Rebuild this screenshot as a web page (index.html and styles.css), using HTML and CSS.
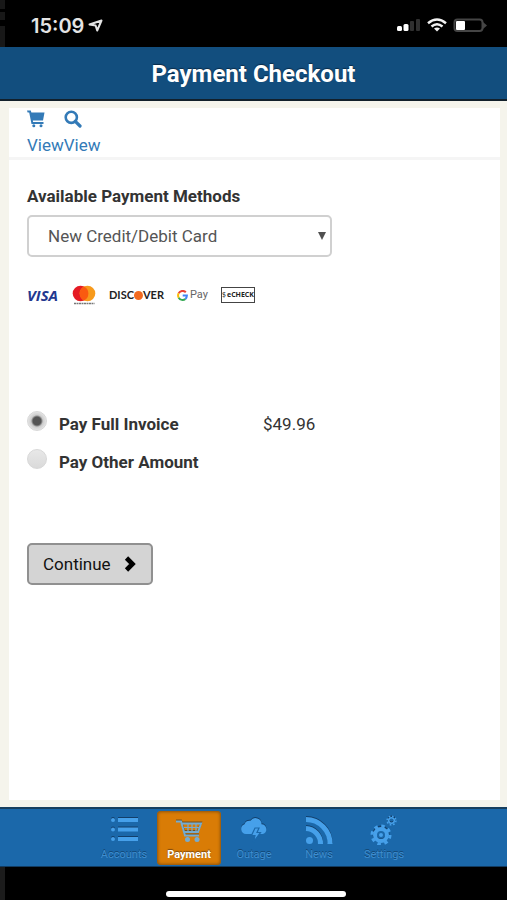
FILE: index.html
```html
<!DOCTYPE html>
<html lang="en">
<head>
<meta charset="utf-8">
<meta name="viewport" content="width=device-width, initial-scale=1">
<title>Payment Checkout</title>
<link rel="stylesheet" href="styles.css">
</head>
<body>
<div class="status">
  <div class="clock">
    <span>15:09</span>
    <svg width="15" height="14" viewBox="0 0 15 14" aria-hidden="true"><path d="M1.500 5.500 13.500 1.500 9.200 11.500 7.600 6.500Z" fill="none" stroke="#e4e4e4" stroke-width="2" stroke-linejoin="round"/></svg>
  </div>
  <div class="signals">
    <svg width="24" height="14" viewBox="0 0 24 14" aria-hidden="true"><rect y="8" width="5" height="5" rx="1.5" fill="#fff"/><rect x="6.500" y="6" width="5" height="7" rx="1.500" fill="#fff"/><rect x="13" y="3" width="4" height="10" rx="1" fill="#303030"/><rect x="19" y="1" width="4" height="12" rx="1" fill="#303030"/></svg>
    <svg width="20" height="14" viewBox="0 0 20 14" aria-hidden="true"><g fill="none" stroke="#f2f2f2" stroke-width="2.500"><path d="M1 5.200Q10-2.300 19 5.200"/><path d="M4.500 8.500Q10 4 15.500 8.500"/></g><path d="M7 10.500Q10 8.500 13 10.500L10 13.500Z" fill="#f2f2f2"/></svg>
    <svg width="34" height="14" viewBox="0 0 34 14" aria-hidden="true"><rect x="1.500" y="1.500" width="28" height="11.500" rx="3" fill="none" stroke="#454545" stroke-width="2"/><rect x="3" y="3" width="9" height="9" rx="1" fill="#fff"/><path d="M30 4 34 7.500 30 11Z" fill="#454545"/></svg>
  </div>
</div>
<header class="title-bar"><h1>Payment Checkout</h1></header>
<main class="page">
  <div class="panel">
    <div class="links">
      <div class="link-icons">
        <svg width="18" height="18" viewBox="0 0 18 18" aria-hidden="true"><path d="M0 .5h3.800l.6 2H17.500L16 10.500H5.800l.3 1.500H16.500V14H4.500L2.200 2.500H.6Z" fill="#337ab7"/><circle cx="6.800" cy="15.700" r="1.500" fill="#337ab7"/><circle cx="14" cy="15.700" r="1.500" fill="#337ab7"/></svg>
        <svg width="18" height="18" viewBox="0 0 18 18" aria-hidden="true"><circle cx="7.300" cy="7.300" r="5.600" fill="none" stroke="#337ab7" stroke-width="2.600"/><path d="M11.300 11.300 16 16" stroke="#337ab7" stroke-width="3.200" stroke-linecap="round"/></svg>
      </div>
      <div class="link-text"><a href="#cart">View</a><a href="#search">View</a></div>
    </div>
    <form class="checkout">
      <label class="field-label" for="method">Available Payment Methods</label>
      <div class="select-box">
        <select id="method"><option>New Credit/Debit Card</option></select>
        <svg class="arrow" width="8" height="8" viewBox="0 0 8 8" aria-hidden="true"><path d="M0 0h8L4 8Z" fill="#505050"/></svg>
      </div>
      <div class="brands">
        <span class="visa">VISA</span>
        <svg width="24" height="20" viewBox="0 0 24 20" role="img" aria-label="Mastercard"><circle cx="8.500" cy="8.500" r="7.800" fill="#e51b24"/><circle cx="15.500" cy="8.500" r="7.800" fill="#f79a1c"/><path d="M12 1.500a7.800 7.800 0 0 1 0 14a7.800 7.800 0 0 1 0-14Z" fill="#fa5a10"/><path d="M2 18.500H22.500" stroke="#777" stroke-width="1.400" stroke-dasharray="2 .5"/></svg>
        <span class="discover">DISC<i class="ball"></i>VER</span>
        <span class="gpay"><svg width="11" height="11" viewBox="0 0 11 11" aria-hidden="true"><g fill="none" stroke-width="2"><path d="M8.800 2.300A4.400 4.400 0 0 0 1.700 3.300" stroke="#ea4335"/><path d="M1.700 3.300A4.500 4.500 0 0 0 1.700 7.700" stroke="#fbbc05"/><path d="M1.700 7.700A4.400 4.400 0 0 0 8.400 8.900" stroke="#34a853"/><path d="M8.400 8.900Q9.900 7.500 9.900 5.500H5.700" stroke="#4285f4"/></g></svg>Pay</span>
        <span class="echeck"><span class="echeck-mark">$</span>eCHECK</span>
      </div>
      <div class="choices">
        <input type="radio" name="amount" id="full" checked>
        <label for="full">Pay Full Invoice</label>
        <span class="amount">$49.96</span>
        <input type="radio" name="amount" id="other">
        <label for="other">Pay Other Amount</label>
      </div>
      <button class="continue" type="button">Continue
        <svg width="13" height="16" viewBox="0 0 13 16" aria-hidden="true"><path d="M2.500 2 8.500 8 2.500 14" fill="none" stroke="#000" stroke-width="4.600"/></svg>
      </button>
    </form>
  </div>
</main>
<nav class="tabs">
  <a class="tab" href="#accounts">
    <svg width="34" height="30" viewBox="0 0 34 30" aria-hidden="true"><g fill="#123f6b" transform="translate(0 -1)"><path d="M11 3h20v4H11ZM11 12.500h20v4H11ZM11 22h20v4H11Z"/><circle cx="6" cy="5" r="2"/><circle cx="6" cy="14.500" r="2"/><circle cx="6" cy="24" r="2"/></g><g fill="#46a0ea"><path d="M11 3h20v4H11ZM11 12.500h20v4H11ZM11 22h20v4H11Z"/><circle cx="6" cy="5" r="2"/><circle cx="6" cy="14.500" r="2"/><circle cx="6" cy="24" r="2"/></g></svg>
    Accounts
  </a>
  <a class="tab active" href="#payment">
    <svg width="34" height="30" viewBox="0 0 34 30" aria-hidden="true"><g transform="translate(0 -1)" fill="none" stroke="#74501c" stroke-width="2"><path d="M4 6.500H9L13 20.500H27M10 8.500H29L26 17H12"/></g><g fill="none" stroke="#76acd0" stroke-width="2"><path d="M4 6.500H9L13 20.500H27M10 8.500H29L26 17H12"/><path d="M12 12.500H27M16 9V17M20 9V17M24 9V17" stroke-width="1.200"/></g><circle cx="15.500" cy="24.500" r="2.500" fill="#76acd0"/><circle cx="25" cy="24.500" r="2.500" fill="#76acd0"/></svg>
    Payment
  </a>
  <a class="tab" href="#outage">
    <svg width="34" height="30" viewBox="0 0 34 30" aria-hidden="true"><path d="M9 20a5 5 0 0 1-1.500-9.700a5 5 0 0 1 6-3.500a6 6 0 0 1 11 3.500a5 5 0 0 1 1.500 9.700Z" transform="translate(0 -2)" fill="#123f6b"/><path d="M9 20a5 5 0 0 1-1.500-9.700a5 5 0 0 1 6-3.500a6 6 0 0 1 11 3.500a5 5 0 0 1 1.500 9.700Z" transform="translate(0 -1)" fill="#46a0ea"/><path d="M18 13h4l-2 4.500h3.500L16.500 27 18 20.500H14.500Z" fill="#46a0ea" stroke="#1b68aa" stroke-width="1.200"/></svg>
    Outage
  </a>
  <a class="tab" href="#news">
    <svg width="34" height="30" viewBox="0 0 34 30" aria-hidden="true"><g fill="none" stroke="#123f6b" stroke-width="5" transform="translate(0 -1)"><path d="M4 13.500A15 15 0 0 1 18.500 29M4 4.500A24 24 0 0 1 28 29"/></g><g fill="none" stroke="#46a0ea" stroke-width="5"><path d="M4 13.500A15 15 0 0 1 18.500 29M4 4.500A24 24 0 0 1 28 29"/></g><circle cx="7.500" cy="25.500" r="3.500" fill="#46a0ea"/></svg>
    News
  </a>
  <a class="tab" href="#settings">
    <svg width="34" height="30" viewBox="0 0 34 30" aria-hidden="true"><g fill="none" stroke="#123f6b" transform="translate(0 -1)"><circle cx="14" cy="20" r="6.500" stroke-width="4"/><circle cx="24.500" cy="5.500" r="3" stroke-width="2"/></g><g fill="none" stroke="#46a0ea"><circle cx="14" cy="20" r="6" stroke-width="4"/><circle cx="14" cy="20" r="9" stroke-width="3" stroke-dasharray="3.500 3.569"/><circle cx="24.500" cy="5.500" r="2.800" stroke-width="1.600"/><circle cx="24.500" cy="5.500" r="4.400" stroke-width="1.500" stroke-dasharray="1.700 1.756"/></g><circle cx="14" cy="20" r="2" fill="#46a0ea"/></svg>
    Settings
  </a>
</nav>
<footer class="home"><span class="home-line"></span></footer>
</body>
</html>
```
FILE: styles.css
```css
* { box-sizing: border-box; }
body {
  margin: 0;
  min-height: 100vh;
  display: flex;
  flex-direction: column;
  background: #000;
  color: #333;
  font: 17px/24px Roboto, "Liberation Sans", sans-serif;
}
a { color: #337ab7; text-decoration: none; }
svg { display: block; flex: none; }
.status {
  display: flex;
  justify-content: space-between;
  height: 47px;
  padding: 18px 20px 0 31px;
  background: linear-gradient(#181818 0 9px, #000 9px 12px, #181818 12px 20px, #000 20px 26px, #181818 26px) 0 0 / 5px 100% no-repeat #000;
}
.clock {
  display: flex;
  gap: 4px;
  height: 16px;
  align-items: center;
  color: #e4e4e4;
  font: 600 20px/16px Inter, sans-serif;
}
.signals { display: flex; gap: 6px; align-items: flex-start; }
.title-bar {
  height: 54px;
  background: #124e7e;
  border-bottom: 2px solid #12202b;
  color: #fff;
  text-align: center;
  text-shadow: 0 -1px 1px #0b2c49;
}
h1 { margin: 0; font-size: 24px; font-weight: 700; line-height: 54px; }
.page {
  flex: 1;
  display: flex;
  padding: 7px 7px 7px 9px;
  background: #f5f4ec;
}
.panel { flex: 1; background: #fff; }
.links {
  height: 52px;
  padding: 2px 18px 0;
  border-bottom: 3px solid #f5f5f5;
}
.link-icons { display: flex; gap: 19px; }
.link-text { display: flex; margin-top: 5px; }
.checkout { padding: 24px 18px; }
.field-label { display: block; font-weight: 700; }
.select-box {
  position: relative;
  max-width: 305px;
  height: 42px;
  margin-top: 7px;
}
select {
  appearance: none;
  width: 100%;
  height: 100%;
  padding: 0 19px;
  border: 2px solid #d0d0d0;
  border-radius: 5px;
  background: #fff;
  color: #555;
  font: inherit;
}
.arrow { position: absolute; right: 6px; top: 17px; }
.brands {
  display: flex;
  align-items: center;
  height: 20px;
  margin-top: 28px;
  gap: 13px;
  line-height: 16px;
}
.visa { width: 32px; color: #22388f; font-family: "Open Sans", sans-serif; font-weight: 700; font-style: italic; font-size: 15px; }
.discover {
  display: flex;
  align-items: center;
  color: #222;
  font: bold 11px/16px Lato, sans-serif;
}
.ball { width: 9px; height: 9px; border-radius: 50%; background: #f26a21; }
.gpay { display: flex; align-items: center; gap: 2px; color: #666; font-size: 11px; }
.echeck {
  width: 34px;
  height: 16px;
  border: 1px solid #444;
  color: #222;
  text-align: center;
  font: bold 7px/14px "Open Sans", sans-serif;
  white-space: nowrap;
}
.echeck-mark { padding-right: 1px; font-weight: 400; }
.choices {
  display: grid;
  grid-template-columns: 20px 192px 1fr;
  grid-auto-rows: 24px;
  row-gap: 14px;
  column-gap: 12px;
  margin-top: 107px;
}
.choices label { font-weight: 700; }
.choices input {
  appearance: none;
  width: 20px;
  height: 20px;
  margin: 0;
  margin-top: -1px;
  border: 1px solid #d8d8d8;
  border-radius: 50%;
  background: linear-gradient(#e8e8e8, #dadada);
}
.choices input:checked { background: radial-gradient(circle, #555 0 4px, #ccc 6px, #e4e4e4 9px); }
.continue {
  display: flex;
  align-items: center;
  gap: 13px;
  height: 42px;
  margin-top: 69px;
  padding: 0 14px;
  border: 2px solid #909090;
  border-radius: 5px;
  background: #d4d4d4;
  color: #111;
  font: inherit;
}
.tabs {
  display: flex;
  justify-content: center;
  gap: 1px;
  height: 60px;
  padding: 2px 0 0 1px;
  background: #1b68aa;
  border-top: 2px solid #173f60;
  border-bottom: 1px solid #123b60;
}
.tab {
  display: flex;
  flex-direction: column;
  align-items: center;
  gap: 2px;
  width: 64px;
  height: 54px;
  padding-top: 4px;
  border-radius: 4px;
  color: #3e8ed0;
  font-size: 11px;
  line-height: 16px;
  text-shadow: 0 -1px 0 #124673;
}
.active { background: #d97c06; box-shadow: inset 0 0 3px 1px #8d530d; color: #fff; font-weight: 700; text-shadow: 0 -1px 1px #784812; }
.home {
  display: flex;
  justify-content: center;
  align-items: flex-end;
  height: 33px;
  padding: 0 0 3px 4px;
  background: linear-gradient(#1c1c1c, #1c1c1c) 0 0 / 5px 100% no-repeat #000;
}
.home-line { width: 180px; height: 6px; border-radius: 3px; background: #fff; }
```
